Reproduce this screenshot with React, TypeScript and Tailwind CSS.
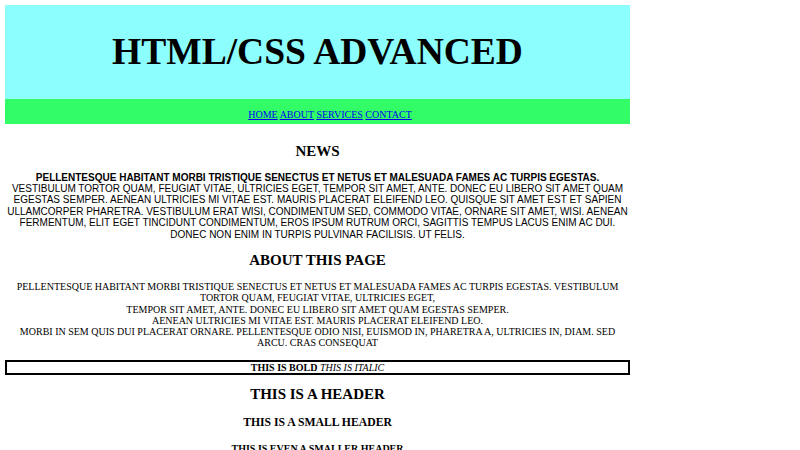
import React from "react";

export default function App() {
  const serif = "font-['Liberation_Serif','Times_New_Roman',serif]";
  return (
    <div className={`${serif} text-black bg-white w-[800px] h-[450px] overflow-hidden`}>
      <div className="w-[625px] ml-[5px] pt-[5px]">
        <div className="h-[94px] bg-[#8cfefe] flex items-center justify-center">
          <h1 className="text-[37.5px] font-bold leading-[42px]">HTML/CSS ADVANCED</h1>
        </div>
        <nav className="h-[25px] bg-[#33fd66] pt-[9.5px] pl-[25px] text-center text-[10px] leading-[11.5px]">
          <a href="#" className="underline text-[#0000ee]">HOME</a>{" "}
          <a href="#" className="underline text-[#0000ee]">ABOUT</a>{" "}
          <a href="#" className="underline text-[#0000ee]">SERVICES</a>{" "}
          <a href="#" className="underline text-[#0000ee]">CONTACT</a>
        </nav>
        <div className="text-center">
          <h2 className="text-[15px] font-bold leading-[17px] mt-[18.5px]">NEWS</h2>
          <div className="font-['Liberation_Sans',Arial,sans-serif] text-[10px] leading-[11.4px] mt-[12px]">
            <b>PELLENTESQUE HABITANT MORBI TRISTIQUE SENECTUS ET NETUS ET MALESUADA FAMES AC TURPIS EGESTAS.</b>
            <br />
            VESTIBULUM TORTOR QUAM, FEUGIAT VITAE, ULTRICIES EGET, TEMPOR SIT AMET, ANTE. DONEC EU LIBERO SIT AMET QUAM
            EGESTAS SEMPER. AENEAN ULTRICIES MI VITAE EST. MAURIS PLACERAT ELEIFEND LEO. QUISQUE SIT AMET EST ET SAPIEN
            ULLAMCORPER PHARETRA. VESTIBULUM ERAT WISI, CONDIMENTUM SED, COMMODO VITAE, ORNARE SIT AMET, WISI. AENEAN
            FERMENTUM, ELIT EGET TINCIDUNT CONDIMENTUM, EROS IPSUM RUTRUM ORCI, SAGITTIS TEMPUS LACUS ENIM AC DUI.
            DONEC NON ENIM IN TURPIS PULVINAR FACILISIS. UT FELIS.
          </div>
          <h2 className="text-[15px] font-bold leading-[17px] mt-[12.5px]">ABOUT THIS PAGE</h2>
          <p className="text-[10px] leading-[11.3px] mt-[11.5px]">
            PELLENTESQUE HABITANT MORBI TRISTIQUE SENECTUS ET NETUS ET MALESUADA FAMES AC TURPIS EGESTAS. VESTIBULUM
            TORTOR QUAM, FEUGIAT VITAE, ULTRICIES EGET,
            <br />
            TEMPOR SIT AMET, ANTE. DONEC EU LIBERO SIT AMET QUAM EGESTAS SEMPER.
            <br />
            AENEAN ULTRICIES MI VITAE EST. MAURIS PLACERAT ELEIFEND LEO.
            <br />
            MORBI IN SEM QUIS DUI PLACERAT ORNARE. PELLENTESQUE ODIO NISI, EUISMOD IN, PHARETRA A, ULTRICIES IN, DIAM. SED
            ARCU. CRAS CONSEQUAT
          </p>
          <div className="mt-[11px] h-[15px] border-2 border-black text-[10px] leading-[11px]">
            <b>THIS IS BOLD</b> <i>THIS IS ITALIC</i>
          </div>
          <h2 className="text-[15px] font-bold leading-[17px] mt-[11.5px]">THIS IS A HEADER</h2>
          <h3 className="text-[11.7px] font-bold leading-[13.5px] mt-[12.5px]">THIS IS A SMALL HEADER</h3>
          <h4 className="text-[10px] font-bold leading-[11.5px] mt-[13.5px]">THIS IS EVEN A SMALLER HEADER</h4>
        </div>
      </div>
    </div>
  );
}
